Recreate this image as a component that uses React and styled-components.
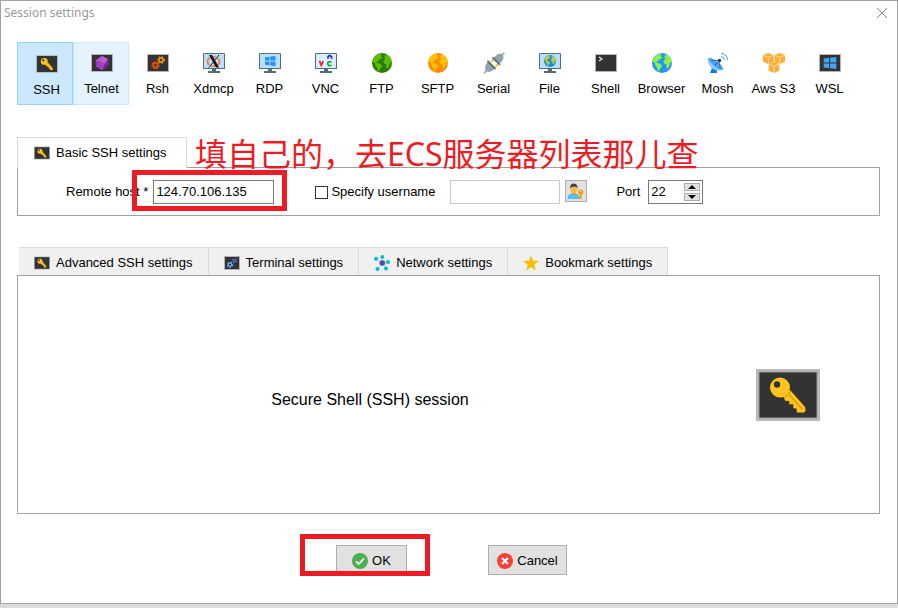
import React, { useState } from "react";
import styled, { createGlobalStyle } from "styled-components";

/* ---------- icons ---------- */

const KeyScreen = ({ width, height, thick }) => (
    <svg width={width} height={height} viewBox="0 0 64 52" fill="none">
        <rect width="64" height="52" fill="#b9b9b9" />
        <rect
            x={thick ? 3 : 2.8}
            y={thick ? 3 : 2.8}
            width={thick ? 58 : 58.4}
            height={thick ? 46 : 46.4}
            fill="#333"
            stroke={thick ? "#999" : "none"}
        />
        <path
            fill="#ffc41f"
            d="M27 27L34 21L49 38Q50.500 43 47.500 43.500H40.700V39.700L37.300 39V35.300H33.300V32L29.300 31.700Z"
        />
        <path stroke="#e0a000" strokeWidth="1.600" d="M33 25.500L47 40.500" />
        <path stroke="#e0a000" strokeWidth="1.500" d="M28 29L34.500 22.500" />
        <circle cx="24" cy="18.500" r="10" fill="#ffc41f" />
        <circle cx="21" cy="15.500" r="3.200" fill="#333" />
    </svg>
);

const Icon22 = ({ children }) => (
    <svg width="22" height="22" viewBox="0 0 22 22" fill="none">
        {children}
    </svg>
);

const Screen = ({ children }) => (
    <Icon22>
        <rect x="0.500" y="2.500" width="21" height="17" fill="#333" stroke="#b4b4b4" />
        {children}
    </Icon22>
);

const Monitor = ({ children }) => (
    <Icon22>
        <rect x="0" y="1" width="22" height="16" rx="0.500" fill="#546e7a" />
        <rect x="1" y="2" width="20" height="14" fill="#bbdefb" />
        <path d="M9 17H13V19H17V21H5V19H9Z" fill="#546e7a" />
        {children}
    </Icon22>
);

const Windows = ({ x, y, color, scale = 1 }) => (
    <g transform={`translate(${x} ${y}) scale(${scale})`} fill={color}>
        <path d="M0 1.300L4.500 0.700V4.600H0ZM5.300 0.600L10.500 0V4.600H5.300ZM0 5.400H4.500V9.300L0 8.700ZM5.300 5.400H10.500V10L5.300 9.400Z" />
    </g>
);

const Earth = ({ sea, land }) => (
    <>
        <circle cx="11" cy="11" r="10" fill={sea} />
        <path
            fill={land}
            d="M2.500 6.500L5 3.300L8.500 1.700L11 2.200L9.500 4L11.300 5.200L10 7L7.800 7.600L8.200 9L6 9.300L5.600 11L8.300 11.300L10.800 13L10.500 15.500L8.600 17L8.200 19.800L6.800 19L6 15.500L4.300 13L3.500 10.500L1.800 9.500Z"
        />
        <path
            fill={land}
            d="M14 3L16.500 2.900L19 5.200L20.500 8.500L20.700 11.500L19 10.500L18.500 13.500L16.800 16.500L15.500 15.800L15.200 12.200L12.900 11.500L12.500 8.800L14.400 7.300L13.200 5.200Z"
        />
    </>
);

const Gear = ({ cx, cy, r, color, width = 2 }) => (
    <g>
        <circle cx={cx} cy={cy} r={r} stroke={color} strokeWidth={width} />
        <circle
            cx={cx}
            cy={cy}
            r={r + width / 2 + 0.4}
            stroke={color}
            strokeWidth="1.200"
            strokeDasharray="1.500 1.700"
        />
    </g>
);

const Cube = ({ x, y }) => (
    <g transform={`translate(${x} ${y})`}>
        <path d="M0 2L5.300 0L10.600 2V8.700L5.300 11L0 8.700Z" fill="#ffac33" />
        <path d="M0.500 2.400L5.300 4.300L10.200 2.400M5.300 4.300V10.600" stroke="#fff" strokeWidth="0.600" />
    </g>
);

const TelnetIcon = () => (
    <Screen>
        <path d="M11 4L17 7L17.500 12.500L11.500 18L5 14.500L4.500 8.500Z" fill="#9c36b5" />
        <path d="M11 4L4.500 8.500L9 9.500Z" fill="#ba55d3" />
        <path d="M9 9.500L14 11.500L17 7L11 4Z" fill="#ba5fcb" />
        <path d="M9 9.500L5 14.500L11.500 18L14 11.500Z" fill="#a53fbe" />
        <path d="M14 11.500L17.500 12.500L11.500 18Z" fill="#7b1fa2" />
        <path d="M17 7L17.500 12.500L14 11.500Z" fill="#8e24aa" />
    </Screen>
);

const RshIcon = () => (
    <Screen>
        <Gear cx={8.5} cy={13.3} r={2.3} color="#e0500c" />
        <Gear cx={14} cy={8} r={2.1} color="#f59100" width={1.6} />
    </Screen>
);

const XdmcpIcon = () => (
    <Monitor>
        <ellipse cx="10.500" cy="9.500" rx="6" ry="4.700" stroke="#f2784b" strokeWidth="1.800" />
        <path d="M16 3L6 15.500" stroke="#bbdefb" strokeWidth="2.400" />
        <path d="M6 3H9L16 15.500H13Z" fill="#111" />
        <path d="M16 3L6 15.500" stroke="#111" />
    </Monitor>
);

const RdpIcon = () => (
    <Monitor>
        <Windows x={6} y={4} color="#2196f3" />
    </Monitor>
);

const VncIcon = () => (
    <Monitor>
        <rect x="1" y="2" width="20" height="14" fill="#dcedfa" />
        <path d="M4.500 9L6.300 13.300L8.200 9" stroke="#f01818" strokeWidth="1.700" />
        <path d="M13 6.700V4.700Q14.700 2.500 16.500 4.700V6.700" stroke="#2222ee" strokeWidth="1.600" />
        <path d="M16.500 10.200Q12.500 8.700 12.700 11.700Q13 14.500 16.500 13.300" stroke="#0aa33a" strokeWidth="1.600" />
    </Monitor>
);

const SerialIcon = () => (
    <Icon22>
        <path d="M21.500 0.800L17.500 4" stroke="#90a4ae" strokeWidth="1.600" />
        <path d="M11 6Q13 2 17 1.800Q20.500 2 20.500 5.500Q20 9 16.500 12Z" fill="#90a4ae" />
        <path d="M9.500 5.500L17 12.800" stroke="#546e7a" strokeWidth="1.800" />
        <path d="M8 10L10.500 7.500M12.500 14.300L15 12" stroke="#ffb300" strokeWidth="1.700" />
        <path d="M5.500 9.500Q2 12 2 16Q2.500 19.800 6 20Q10 19.500 11.500 16Z" fill="#90a4ae" />
        <path d="M4.500 9L12.500 17" stroke="#546e7a" strokeWidth="1.800" />
        <path d="M3.500 18.500L1 21.300" stroke="#90a4ae" strokeWidth="1.600" />
    </Icon22>
);

const FileIcon = () => (
    <Monitor>
        <g transform="translate(4.400 2.400) scale(0.600)">
            <Earth sea="#1e88e5" land="#b8d432" />
        </g>
    </Monitor>
);

const ShellIcon = () => (
    <Screen>
        <path d="M4 5L7 7L4 9" stroke="#eee" strokeWidth="1.200" />
    </Screen>
);

const MoshIcon = () => (
    <Icon22>
        <path d="M5 16L3 21H10L9.500 17Z" fill="#1976d2" />
        <path d="M1.500 6Q-0.500 11 4 15.500Q9.500 20.500 16 17.800Z" fill="#90caf9" />
        <path d="M1.500 6Q4 5 10 9.500Q16.500 14 16 17.800Q11 18 6 13Q1.500 9 1.500 6Z" fill="#42a5f5" />
        <path d="M4 8.500L12 8.500L13 16" stroke="#3c6fae" />
        <path d="M8 13L12.500 8.500" stroke="#1a4f94" />
        <circle cx="12.500" cy="8.500" r="1.700" fill="#0d3c87" />
        <path d="M14 4.500Q17 5 17.300 8M14 1.200Q20.300 2 20.700 8" stroke="#64b5f6" strokeWidth="1.100" />
    </Icon22>
);

const AwsIcon = () => (
    <Icon22>
        <Cube x={0} y={1} />
        <Cube x={11.4} y={1} />
        <Cube x={5.7} y={10} />
    </Icon22>
);

const WslIcon = () => (
    <Screen>
        <Windows x={4.7} y={5} color="#42a5f5" scale={1.2} />
    </Screen>
);

const SmallKey = () => <KeyScreen width={16} height={14} />;

const TerminalIcon = () => (
    <svg width="16" height="14" viewBox="0 0 16 14" fill="none">
        <rect x="0.500" y="0.500" width="15" height="13" fill="#333" stroke="#b4b4b4" />
        <Gear cx={6} cy={8.8} r={1.7} color="#5bb8f5" width={1.2} />
        <Gear cx={10.5} cy={4.7} r={1.2} color="#5c6bc0" width={1.1} />
    </svg>
);

const NetworkIcon = () => (
    <svg width="16" height="16" viewBox="0 0 16 16">
        <path d="M8 8L2 4M8 8V2M8 8L14 7M8 8L12 13.500M8 8L3.500 14" stroke="#b4cdd8" />
        <g fill="#00bcd4">
            <circle cx="2" cy="3.700" r="2" />
            <circle cx="8.300" cy="1.900" r="1.900" />
            <circle cx="14" cy="7" r="2" />
            <circle cx="12" cy="13.500" r="2" />
            <circle cx="3.500" cy="14" r="2" />
        </g>
        <circle cx="8.300" cy="8" r="2.800" fill="#3f51b5" />
    </svg>
);

const StarIcon = () => (
    <svg width="16" height="16" viewBox="0 0 16 16">
        <path
            fill="#f5c000"
            d="M8 0.300L10 5.800L15.900 6L11.300 9.700L12.900 15.400L8 12.200L3.100 15.400L4.700 9.700L0.100 6L6 5.800Z"
        />
    </svg>
);

const UserKeyIcon = () => (
    <svg width="18" height="16" viewBox="0 0 18 16" fill="none">
        <path d="M0.500 16Q0.500 11 4.500 10.500H9Q12.500 11 12.500 16Z" fill="#4fc3f7" />
        <path d="M5 9H8.500V11L6.800 12.500L5 11Z" fill="#f09000" />
        <ellipse cx="6.800" cy="6" rx="3.300" ry="4.200" fill="#ffb74d" />
        <path d="M3 6Q2.500 0.500 7 0.500Q11 0.700 10.600 6L9.500 3.800H5L3.700 4.500Z" fill="#424242" />
        <circle cx="13.700" cy="9" r="2.600" fill="#ff9800" />
        <path d="M13.700 10V16M13.700 14.300H11.800" stroke="#ff9800" strokeWidth="1.800" />
        <circle cx="13.700" cy="8.200" r="0.700" fill="#fff" />
    </svg>
);

const OkIcon = () => (
    <svg width="16" height="16" viewBox="0 0 16 16" fill="none">
        <circle cx="8" cy="8" r="8" fill="#4caf50" />
        <path d="M4 8.300L6.800 11L12 5.500" stroke="#fff" strokeWidth="1.800" />
    </svg>
);

const CancelIcon = () => (
    <svg width="16" height="16" viewBox="0 0 16 16" fill="none">
        <circle cx="8" cy="8" r="8" fill="#f44336" />
        <path d="M5 5L11 11M11 5L5 11" stroke="#fff" strokeWidth="2" />
    </svg>
);

/* ---------- data ---------- */

const sessionTypes = [
    { name: "SSH", icon: <KeyScreen width={22} height={18} /> },
    { name: "Telnet", icon: <TelnetIcon /> },
    { name: "Rsh", icon: <RshIcon /> },
    { name: "Xdmcp", icon: <XdmcpIcon /> },
    { name: "RDP", icon: <RdpIcon /> },
    { name: "VNC", icon: <VncIcon /> },
    { name: "FTP", icon: <Icon22><Earth sea="#2b7a0b" land="#58c000" /></Icon22> },
    { name: "SFTP", icon: <Icon22><Earth sea="#ff8a00" land="#ffc400" /></Icon22> },
    { name: "Serial", icon: <SerialIcon /> },
    { name: "File", icon: <FileIcon /> },
    { name: "Shell", icon: <ShellIcon /> },
    { name: "Browser", icon: <Icon22><Earth sea="#2196f3" land="#8df04a" /></Icon22> },
    { name: "Mosh", icon: <MoshIcon /> },
    { name: "Aws S3", icon: <AwsIcon /> },
    { name: "WSL", icon: <WslIcon /> },
];

const settingTabs = [
    { name: "Advanced SSH settings", icon: <SmallKey /> },
    { name: "Terminal settings", icon: <TerminalIcon /> },
    { name: "Network settings", icon: <NetworkIcon /> },
    { name: "Bookmark settings", icon: <StarIcon /> },
];

function App() {
    const [selected, setSelected] = useState("SSH");
    const [host, setHost] = useState("124.70.106.135");
    const [useName, setUseName] = useState(false);
    const [username, setUsername] = useState("");
    const [port, setPort] = useState(22);

    return (
        <>
            <GlobalStyle />
            <Dialog>
                <TitleBar>
                    <Title>Session settings</Title>
                    <CloseButton type="button" aria-label="Close">
                        <svg width="12" height="12" viewBox="0 0 12 12">
                            <path d="M1 1L11 11M11 1L1 11" stroke="#888" />
                        </svg>
                    </CloseButton>
                </TitleBar>
                <Content>
                    <Toolbar>
                        {sessionTypes.map(({ name, icon }) => (
                            <TypeButton
                                key={name}
                                type="button"
                                $active={name === selected}
                                $hovered={name === "Telnet"}
                                onClick={() => setSelected(name)}
                            >
                                <IconSlot>{icon}</IconSlot>
                                {name}
                            </TypeButton>
                        ))}
                    </Toolbar>

                    <BasicSection>
                        <BasicTab type="button">
                            <SmallKey />
                            Basic SSH settings
                        </BasicTab>
                        <BasicPanel>
                            <HostField>
                                <label htmlFor="host">Remote host *</label>
                                <TextInput
                                    id="host"
                                    $width={121}
                                    $color="#7a7a7a"
                                    value={host}
                                    onChange={(e) => setHost(e.target.value)}
                                />
                                <HostMark />
                            </HostField>
                            <UserField>
                                <CheckLabel>
                                    <CheckBox
                                        type="checkbox"
                                        checked={useName}
                                        onChange={() => setUseName(!useName)}
                                    />
                                    Specify username
                                </CheckLabel>
                                <UserInput>
                                    <TextInput
                                        aria-label="Username"
                                        $width={110}
                                        $color="#c8c8c8"
                                        value={username}
                                        disabled={!useName}
                                        onChange={(e) => setUsername(e.target.value)}
                                    />
                                    <UserButton type="button" aria-label="Manage users">
                                        <UserKeyIcon />
                                    </UserButton>
                                </UserInput>
                            </UserField>
                            <PortField>
                                <label htmlFor="port">Port</label>
                                <SpinBox>
                                    <PortInput
                                        id="port"
                                        value={port}
                                        onChange={(e) => setPort(Number(e.target.value) || 0)}
                                    />
                                    <Arrows>
                                        <ArrowButton
                                            type="button"
                                            aria-label="Increase port"
                                            onClick={() => setPort(port + 1)}
                                        >
                                            <svg width="8" height="4" viewBox="0 0 8 4">
                                                <path d="M4 0L8 4H0Z" />
                                            </svg>
                                        </ArrowButton>
                                        <ArrowButton
                                            type="button"
                                            aria-label="Decrease port"
                                            onClick={() => setPort(port - 1)}
                                        >
                                            <svg width="8" height="4" viewBox="0 0 8 4">
                                                <path d="M4 4L8 0H0Z" />
                                            </svg>
                                        </ArrowButton>
                                    </Arrows>
                                </SpinBox>
                            </PortField>
                        </BasicPanel>
                        <Note>填自己的，去ECS服务器列表那儿查</Note>
                    </BasicSection>

                    <Tabs>
                        {settingTabs.map(({ name, icon }) => (
                            <Tab key={name} type="button">
                                {icon}
                                {name}
                            </Tab>
                        ))}
                    </Tabs>
                    <SessionPanel>
                        <SessionText>Secure Shell (SSH) session</SessionText>
                        <KeyScreen width={64} height={52} thick />
                    </SessionPanel>

                    <Footer>
                        <OkSlot>
                            <ActionButton type="button" $width={71}>
                                <OkIcon />
                                OK
                            </ActionButton>
                            <OkMark />
                        </OkSlot>
                        <ActionButton type="button" $width={79}>
                            <CancelIcon />
                            Cancel
                        </ActionButton>
                    </Footer>
                </Content>
            </Dialog>
        </>
    );
}

const GlobalStyle = createGlobalStyle`
    * {
        box-sizing: border-box;
    }
    body {
        margin: 0;
        min-height: 100vh;
        background: linear-gradient(#b4b4b4, #dcdcdc);
        font-family: "Liberation Sans", Arial, sans-serif;
        font-size: 13px;
        line-height: 16px;
        color: #000;
    }
    button, input {
        font: inherit;
        color: inherit;
        margin: 0;
        padding: 0;
        border-radius: 0;
    }
    button {
        white-space: nowrap;
    }
    svg {
        display: block;
        flex: none;
    }
`;
const Dialog = styled.div`
    background-color: #fff;
    border: 1px solid #a0a0a0;
`;
const TitleBar = styled.header`
    display: flex;
    justify-content: space-between;
    align-items: center;
    height: 24px;
    padding: 0 9px 0 3px;
`;
const Title = styled.h1`
    margin: 0;
    font-family: "Noto Sans", "Open Sans", sans-serif;
    font-size: 12px;
    font-weight: normal;
    color: #999;
`;
const CloseButton = styled.button`
    background: none;
    border: none;
`;
const Content = styled.main`
    padding: 17px 17px 28px 16px;
`;
const Toolbar = styled.nav`
    display: flex;
`;
const TypeButton = styled.button`
    display: flex;
    flex-direction: column;
    align-items: center;
    gap: 7px;
    width: 56px;
    height: 63px;
    padding: ${({ $active }) => ($active ? "10px 0 0 3px" : "9px 0 0 1px")};
    border: 1px solid transparent;
    background-color: transparent;
    ${({ $hovered }) =>
        $hovered && "background-color: #e5f3ff; border-color: #cce8ff;"}
    ${({ $active }) =>
        $active && "background-color: #cce8ff; border-color: #99d1ff;"}
`;
const IconSlot = styled.span`
    display: flex;
    align-items: center;
    height: 22px;
    padding-left: 1px;
`;
const BasicSection = styled.section`
    position: relative;
    margin-top: 32px;
`;
const BasicTab = styled.button`
    position: relative;
    display: flex;
    align-items: center;
    gap: 6px;
    height: 31px;
    margin-bottom: -1px;
    padding: 0 19px 0 16px;
    background-color: #fff;
    border: 1px solid #d9d9d9;
    border-bottom: none;
`;
const BasicPanel = styled.div`
    display: flex;
    align-items: center;
    padding: 12px 0 11px 48px;
    border: 1px solid #a0a0a0;
`;
const HostField = styled.div`
    position: relative;
    display: flex;
    align-items: center;
    gap: 5px;
`;
const TextInput = styled.input`
    width: ${({ $width }) => $width}px;
    height: 24px;
    padding: 0 2px 1px;
    background-color: #fff;
    border: 1px solid ${({ $color }) => $color};
    outline: none;
`;
const Mark = styled.span`
    position: absolute;
    border: 5px solid #ed1c24;
    pointer-events: none;
`;
const HostMark = styled(Mark)`
    top: -10px;
    right: -13px;
    width: 155px;
    height: 41px;
`;
const UserField = styled.div`
    display: flex;
    align-items: center;
    gap: 15px;
    margin-left: 41px;
`;
const CheckLabel = styled.label`
    display: flex;
    align-items: center;
    gap: 3px;
`;
const CheckBox = styled.input`
    appearance: none;
    width: 13px;
    height: 13px;
    background-color: #fff;
    border: 1px solid #333;
    &:checked {
        box-shadow: inset 0 0 0 2px #fff;
        background-color: #333;
    }
`;
const UserInput = styled.div`
    display: flex;
    gap: 5px;
`;
const UserButton = styled.button`
    display: flex;
    align-items: center;
    justify-content: center;
    width: 22px;
    height: 22px;
    background-color: #e1e1e1;
    border: 1px solid #adadad;
`;
const PortField = styled.div`
    display: flex;
    align-items: center;
    gap: 8px;
    margin-left: 29px;
`;
const SpinBox = styled.div`
    display: flex;
    align-items: center;
    width: 55px;
    height: 24px;
    padding: 0 2px;
    border: 1px solid #7a7a7a;
`;
const PortInput = styled.input`
    flex: 1;
    min-width: 0;
    border: none;
    outline: none;
`;
const Arrows = styled.div`
    display: flex;
    flex-direction: column;
    gap: 2px;
`;
const ArrowButton = styled.button`
    display: flex;
    align-items: center;
    justify-content: center;
    width: 16px;
    height: 8px;
    background-color: #e1e1e1;
    border: 1px solid #adadad;
`;
const Note = styled.p`
    position: absolute;
    top: -5px;
    left: 178px;
    margin: 0;
    font-family: "Noto Sans", "Noto Sans CJK SC", sans-serif;
    font-size: 32px;
    line-height: 44px;
    white-space: nowrap;
    color: #ed1c24;
    pointer-events: none;
`;
const Tabs = styled.div`
    display: flex;
    margin: 31px 0 0 2px;
`;
const Tab = styled.button`
    display: flex;
    align-items: center;
    gap: 6px;
    height: 28px;
    padding: 2px 15px 0;
    background-color: #f0f0f0;
    border: 1px solid #d9d9d9;
    border-width: 1px 1px 0 0;
`;
const SessionPanel = styled.section`
    display: grid;
    grid-template-columns: 1fr auto;
    align-items: center;
    min-height: 239px;
    padding-right: 59px;
    border: 1px solid #a0a0a0;
`;
const SessionText = styled.p`
    margin: 0 34px 0 0;
    padding-top: 10px;
    font-size: 16px;
    line-height: 20px;
    text-align: center;
`;
const Footer = styled.footer`
    display: flex;
    justify-content: center;
    gap: 81px;
    margin-top: 31px;
    padding-left: 6px;
`;
const OkSlot = styled.div`
    position: relative;
`;
const OkMark = styled(Mark)`
    top: -11px;
    left: -36px;
    width: 130px;
    height: 42px;
`;
const ActionButton = styled.button`
    display: flex;
    align-items: center;
    justify-content: center;
    gap: 4px;
    width: ${({ $width }) => $width}px;
    height: 30px;
    padding-top: 1px;
    background-color: #e1e1e1;
    border: 1px solid #adadad;
`;

export default App;
